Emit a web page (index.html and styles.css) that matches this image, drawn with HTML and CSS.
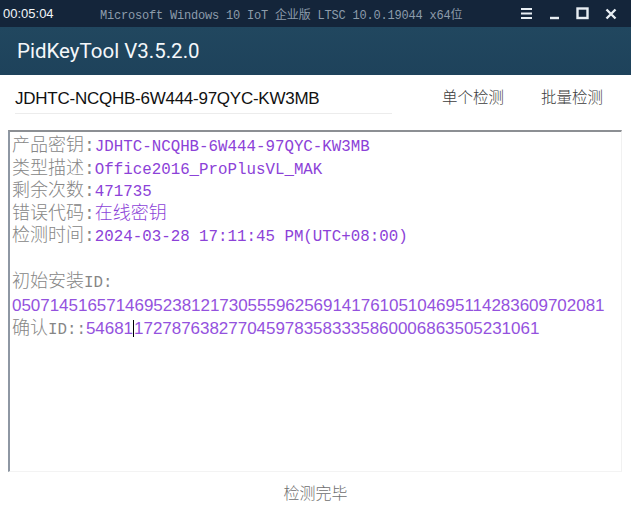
FILE: index.html
```html
<!DOCTYPE html>
<html>
<head>
    <meta http-equiv="Content-Type" content="text/html; charset=UTF-8">
    <title>PidKeyTool</title>
    <link rel="stylesheet" href="styles.css">
</head>

<body>
    <div class="statusbar">
        <span class="clock">00:05:04</span>
        <span class="os">Microsoft Windows 10 IoT 企业版 LTSC 10.0.19044 x64位</span>
        <div class="winbtns">
            <svg width="13" height="13" viewBox="0 0 13 13"><path d="M1 2h11M1 6.5h11M1 11h11" stroke="#e8eef3" stroke-width="2.2"/></svg>
            <svg width="11" height="13" viewBox="0 0 11 13"><path d="M1 11h9" stroke="#e8eef3" stroke-width="2.4"/></svg>
            <svg width="13" height="13" viewBox="0 0 13 13"><rect x="1.5" y="1.5" width="10" height="9.5" fill="none" stroke="#e8eef3" stroke-width="2.4"/></svg>
            <svg width="12" height="12" viewBox="0 0 12 12"><path d="M1.5 1.5l9 9M10.5 1.5l-9 9" stroke="#e8eef3" stroke-width="2.4"/></svg>
        </div>
    </div>

    <div class="titlebar">PidKeyTool V3.5.2.0</div>

    <div class="toolbar">
        <div class="keyinput">JDHTC-NCQHB-6W444-97QYC-KW3MB</div>
        <div class="actions">
            <span class="action">单个检测</span>
            <span class="action">批量检测</span>
        </div>
    </div>

    <div class="result">
        <div class="line"><span class="label">产品密钥:</span><span class="value">JDHTC-NCQHB-6W444-97QYC-KW3MB</span></div>
        <div class="line"><span class="label">类型描述:</span><span class="value">Office2016_ProPlusVL_MAK</span></div>
        <div class="line"><span class="label">剩余次数:</span><span class="value">471735</span></div>
        <div class="line"><span class="label">错误代码:</span><span class="value cjk">在线密钥</span></div>
        <div class="line"><span class="label">检测时间:</span><span class="value">2024-03-28 17:11:45 PM(UTC+08:00)</span></div>
        <div class="line"></div>
        <div class="line"><span class="label">初始安装</span><span class="label latin">ID:</span></div>
        <div class="line id">050714516571469523812173055596256914176105104695114283609702081</div>
        <div class="line"><span class="label">确认</span><span class="label latin">ID::</span><span class="id">54681<span class="caret"></span>1727876382770459783583335860006863505231061</span></div>
    </div>

    <div class="footer">检测完毕</div>
</body>

</html>
```

FILE: styles.css
```css
body {
    margin: 0;
    width: 631px;
    height: 506px;
    overflow: hidden;
    background: #fff;
    font-family: "Liberation Sans", "Noto Sans CJK SC", sans-serif;
}

.statusbar {
    height: 27px;
    display: flex;
    align-items: center;
    background: #14253a;
    padding-left: 3px;
}
.clock {
    color: #f2f5f8;
    font-family: "Liberation Sans", sans-serif;
    font-size: 13px;
    width: 97px;
}
.os {
    color: #8d9cab;
    font-family: "Liberation Mono", "Noto Sans CJK SC", monospace;
    font-size: 12px;
    letter-spacing: -0.2px;
}
.winbtns {
    margin-left: auto;
    margin-right: 14px;
    display: flex;
    align-items: center;
    gap: 16px;
}

.titlebar {
    height: 48px;
    box-sizing: border-box;
    padding: 12px 0 0 17px;
    background: linear-gradient(#21475f, #1e425b);
    color: #f4f7fa;
    font-family: Roboto, sans-serif;
    font-size: 20.5px;
}

.toolbar {
    height: 55px;
    display: flex;
    align-items: flex-start;
    padding: 11px 0 0 15px;
    box-sizing: border-box;
}
.keyinput {
    width: 377px;
    height: 27px;
    line-height: 26px;
    border-bottom: 1px solid #ececec;
    color: #111;
    font-size: 17px;
    letter-spacing: -0.25px;
}
.actions {
    margin-left: 50px;
    display: flex;
    gap: 37px;
    line-height: 24px;
}
.action {
    color: #3c3c3c;
    font-size: 15.5px;
    font-weight: 300;
}

.result {
    height: 342px;
    box-sizing: border-box;
    margin: 0 9px 0 8px;
    padding: 3px 0 0 2px;
    border-top: 2px solid #8c8f93;
    border-left: 2px solid #8e97a3;
    border-right: 1px solid #f1f1f1;
    border-bottom: 1px solid #f3f3f3;
    font-family: "Liberation Mono", "Noto Sans CJK SC", monospace;
    font-size: 15.8px;
}
.line {
    height: 22.6px;
    line-height: 22.6px;
    white-space: nowrap;
}
.label {
    color: #868686;
    font-size: 18px;
    font-weight: 300;
}
.label.latin {
    font-size: 15.8px;
}
.value {
    color: #8c42d8;
}
.value.cjk {
    font-size: 18px;
    font-weight: 300;
}
.id {
    color: #9452de;
    font-family: "Liberation Sans", sans-serif;
    font-size: 17px;
    letter-spacing: -0.03px;
}
.line.id {
    height: 25px;
    line-height: 26px;
}
.caret {
    display: inline-block;
    width: 0;
    height: 17px;
    border-left: 1px solid #000;
    vertical-align: -3px;
}

.footer {
    text-align: center;
    padding-top: 8px;
    color: #6e6e6e;
    font-size: 16px;
    font-weight: 300;
}
```
